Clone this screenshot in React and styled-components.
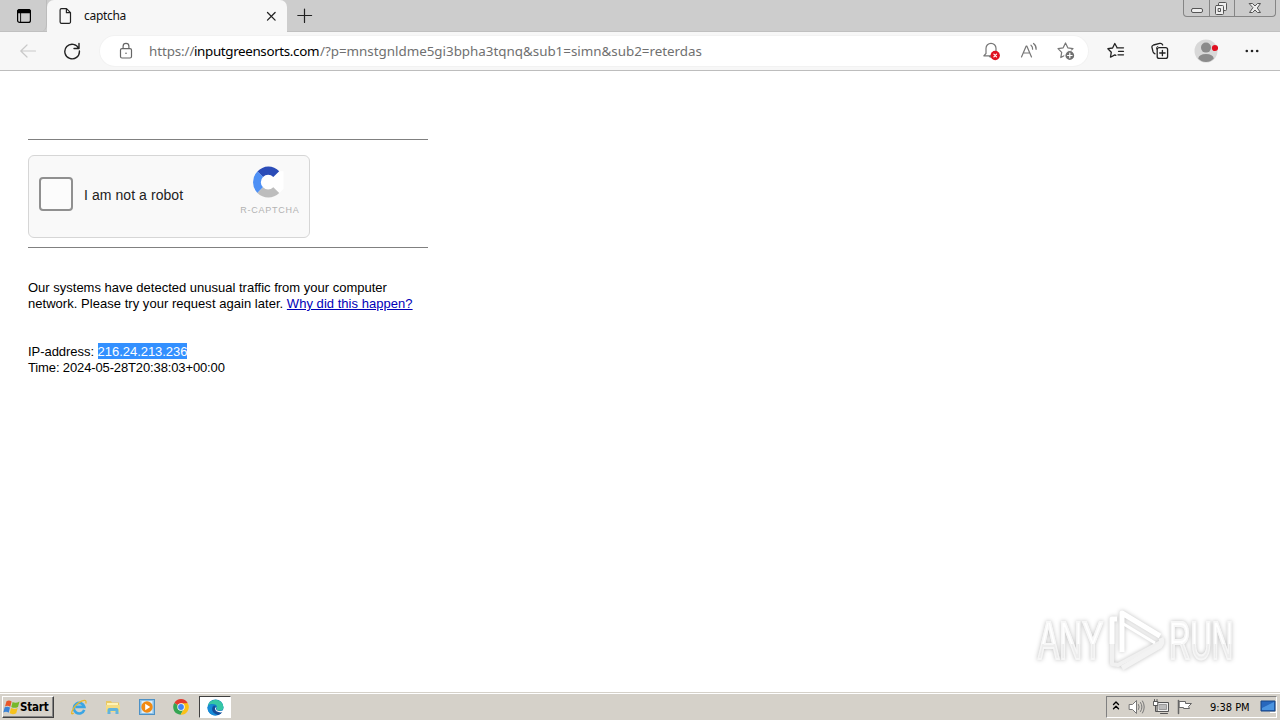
import React from 'react';
import styled, { createGlobalStyle } from 'styled-components';

const GlobalStyle = createGlobalStyle`
  body {
    margin: 0;
    overflow: hidden;
    background: #fff;
  }
  svg {
    display: block;
    flex: none;
  }
`;

const Screen = styled.div`
  display: flex;
  flex-direction: column;
  width: 1280px;
  height: 720px;
  font-family: "Liberation Sans", Arial, sans-serif;
`;

// ---- browser chrome ----

const TabStrip = styled.div`
  display: flex;
  align-items: flex-start;
  height: 32px;
  background: #cdcdcd;
  box-shadow: inset 0 -1px #c0c0c0;
`;

const TabMenu = styled.div`
  box-sizing: border-box;
  width: 47px;
  height: 32px;
  padding: 8px 0 0 16px;
  border-radius: 0 0 7px 0;
  border-right: 1px solid #bcbcbc;
`;

const Tab = styled.div`
  box-sizing: border-box;
  display: flex;
  align-items: center;
  width: 240px;
  height: 32px;
  padding-left: 11px;
  background: #f7f7f7;
  border-radius: 7px 7px 0 0;
`;

const TabTitle = styled.div`
  width: 181px;
  padding-left: 10px;
  font: 12px/16px "Noto Sans", sans-serif;
  letter-spacing: -0.3px;
  color: #111;
`;

const NewTab = styled.div`
  flex: 1;
  padding: 8px 0 0 10px;
`;

const WindowButtons = styled.div`
  box-sizing: border-box;
  display: flex;
  width: 93px;
  height: 17px;
  margin-right: 4px;
  border: 1px solid #858585;
  border-top: 0;
  border-radius: 0 0 4px 4px;
  background: #cbcbcb;
`;

const WindowButton = styled.div`
  display: flex;
  box-sizing: border-box;
  justify-content: center;
  width: ${props => props.$width}px;
  height: 16px;
  border-left: ${props => (props.$first ? '0' : '1px solid #858585')};
`;

const Toolbar = styled.div`
  box-sizing: border-box;
  display: flex;
  align-items: center;
  height: 39px;
  background: #f7f7f7;
  border-bottom: 1px solid #bdbdbd;
`;

const ToolButton = styled.div`
  display: flex;
  justify-content: center;
  width: ${props => props.$width}px;
`;

const AddressBar = styled.div`
  box-sizing: border-box;
  display: flex;
  align-items: center;
  width: 988px;
  height: 30px;
  padding-left: 18px;
  border-radius: 15px;
  background: #fff;
  box-shadow: 0 0 0 1px #f2f2f2;
`;

const Url = styled.div`
  flex: 1;
  display: flex;
  padding-left: 15px;
  font: 13.4px/20px "Noto Sans", sans-serif;
  white-space: nowrap;
`;

const UrlPart = styled.span`
  width: ${props => props.$width}px;
  letter-spacing: ${props => props.$spacing}px;
  color: ${props => (props.$host ? '#000' : '#707070')};
`;

// ---- page ----

const Page = styled.main`
  box-sizing: border-box;
  position: relative;
  flex: 1;
  padding: 68px 28px 0;
  background: #fff;
`;

const Rule = styled.div`
  width: 400px;
  height: 1px;
  background: #808080;
`;

const CaptchaBox = styled.div`
  box-sizing: border-box;
  display: flex;
  width: 282px;
  height: 83px;
  margin: 15px 0 9px;
  padding: 9px 9px 0 10px;
  border: 1px solid #d6d6d6;
  border-radius: 6px;
  background: #f9f9f9;
`;

const Checkbox = styled.div`
  box-sizing: border-box;
  width: 34px;
  height: 34px;
  margin-top: 12px;
  border: 2px solid #909090;
  border-radius: 4px;
  background: #fcfcfc;
`;

const CaptchaLabel = styled.div`
  flex: 1;
  padding: 21px 0 0 11px;
  font-size: 14px;
  line-height: 18px;
  letter-spacing: 0.07px;
  color: #222;
`;

const Brand = styled.div`
  display: flex;
  flex-direction: column;
  align-items: center;
  width: 60px;
`;

const BrandLogo = styled.svg`
  margin-right: 4px;
`;

const BrandName = styled.div`
  margin-top: 5px;
  font-size: 9px;
  line-height: 12px;
  letter-spacing: 0.75px;
  white-space: nowrap;
  color: #b2b2b2;
`;

const Message = styled.div`
  margin-top: 32px;
  font-size: 13px;
  line-height: 16px;
  color: #000;
`;

const Line = styled.div`
  height: 16px;
  white-space: nowrap;
  letter-spacing: ${props => props.$spacing}px;
`;

const WhyLink = styled.a`
  color: #0000b8;
  text-decoration: underline;
`;

const Selected = styled.span`
  display: inline-block;
  height: 16px;
  margin-top: -1px;
  vertical-align: top;
  line-height: 18px;
  background: #3390ff;
  color: #fff;
`;

const Watermark = styled.div`
  position: absolute;
  left: 1038px;
  top: 537px;
  display: flex;
  align-items: center;
  filter: drop-shadow(0 0 2px rgba(0, 0, 0, 0.25));
`;

const WatermarkWord = styled.div`
  width: ${props => props.$width}px;
  height: 64px;
`;

const WatermarkText = styled.span`
  display: inline-block;
  font: 53px/64px "Liberation Sans", sans-serif;
  color: transparent;
  background: linear-gradient(#fff 54%, #ededed 54%);
  background-clip: text;
  -webkit-text-stroke: 2px rgba(246, 246, 246, 0.9);
  transform: scaleX(${props => props.$scale});
  transform-origin: 0 0;
  white-space: nowrap;
`;

// ---- taskbar ----

const Taskbar = styled.footer`
  box-sizing: border-box;
  display: flex;
  align-items: flex-start;
  height: 28px;
  padding: 3px 3px 0 2px;
  background: #d5d1c9;
  border-top: 1px solid #d5d1c9;
  box-shadow: inset 0 1px #fff;
`;

const StartButton = styled.div`
  box-sizing: border-box;
  display: flex;
  align-items: center;
  width: 52px;
  height: 22px;
  border: 1px solid;
  border-color: #fff #404040 #404040 #fff;
  box-shadow: inset -1px -1px #858585;
  font: bold 11.5px/18px "DejaVu Sans Condensed", sans-serif;
  letter-spacing: -0.2px;
  color: #000;
`;

const QuickLaunch = styled.div`
  flex: 1;
  display: flex;
  align-items: center;
  gap: 18px;
  padding-left: 17px;
`;

const ActiveTask = styled.div`
  box-sizing: border-box;
  display: flex;
  justify-content: center;
  align-items: center;
  width: 32px;
  height: 22px;
  margin-left: -8px;
  border: 1px solid;
  border-color: #404040 #fff #fff #404040;
  background: #fff;
`;

const Tray = styled.div`
  box-sizing: border-box;
  display: flex;
  align-items: center;
  width: 171px;
  height: 22px;
  padding-left: 5px;
  border: 1px solid;
  border-color: #808080 #fff #fff #808080;
`;

const Clock = styled.div`
  width: 54px;
  padding-left: 11px;
  margin-top: 1px;
  font: 11px/16px "DejaVu Sans Condensed", sans-serif;
  letter-spacing: -0.05px;
  white-space: nowrap;
  color: #000;
`;

function LineIcon({ width, height, color = '#222', sw = 1.2, children }) {
  return (
    <svg width={width} height={height} viewBox={`0 0 ${width} ${height}`} fill="none" stroke={color}
      strokeWidth={sw} strokeLinejoin="round" strokeLinecap="round">
      {children}
    </svg>
  );
}

function Tabs() {
  return (
    <TabStrip>
      <TabMenu>
        <LineIcon width={16} height={16} color="#000">
          <rect x="1.6" y="1.6" width="12.8" height="12.8" rx="2" />
          <path d="M1.600 4.600V3.600a2 2 0 0 1 2-2h8.800a2 2 0 0 1 2 2v1z" fill="#000" />
          <path d="M4.600 5v9" strokeWidth=".9" />
        </LineIcon>
      </TabMenu>
      <Tab>
        <LineIcon width={16} height={16}>
          <path d="M3.500.6h5l4 4v9.300a1.400 1.400 0 0 1-1.400 1.400H3.500A1.400 1.400 0 0 1 2.100 14V2A1.400 1.400 0 0 1 3.500.6zM8.400.8v3.900h4" />
        </LineIcon>
        <TabTitle>captcha</TabTitle>
        <LineIcon width={13} height={14} sw={1.3}>
          <path d="M2.500 3.500l7.600 7.600M10.100 3.500l-7.600 7.600" />
        </LineIcon>
      </Tab>
      <NewTab>
        <LineIcon width={16} height={16} sw={1.2}>
          <path d="M7.500 1v13.500M.8 7.500h13.800" />
        </LineIcon>
      </NewTab>
      <WindowButtons>
        <WindowButton $width={25} $first>
          <LineIcon width={14} height={16} color="#555" sw={1}>
            <rect x="1.500" y="8.500" width="11" height="4" rx="1.500" fill="#eee" />
          </LineIcon>
        </WindowButton>
        <WindowButton $width={25}>
          <LineIcon width={14} height={16} color="#555" sw={1}>
            <rect x="3.500" y="2.500" width="8" height="8" rx="1" fill="#eee" />
            <rect x=".500" y="5.500" width="8" height="9" rx="1" fill="#eee" />
            <rect x="3.500" y="8.500" width="2" height="3" />
          </LineIcon>
        </WindowButton>
        <WindowButton $width={41}>
          <LineIcon width={14} height={16} color="#555" sw={1}>
            <path d="M1.500 3.500h3L7 6l2.500-2.500h3L9.300 8l3.200 4.500h-3L7 10l-2.500 2.500h-3L4.700 8z" fill="#eee" />
          </LineIcon>
        </WindowButton>
      </WindowButtons>
    </TabStrip>
  );
}

function AddressRow() {
  return (
    <Toolbar>
      <ToolButton $width={56}>
        <LineIcon width={18} height={16} color="#c9c9c9">
          <path d="M16.500 8H2M8 2L1.800 8 8 14" />
        </LineIcon>
      </ToolButton>
      <ToolButton $width={32}>
        <LineIcon width={18} height={18} sw={1.4}>
          <path d="M15.800 6.600A7.300 7.300 0 1 0 16.400 9M16 1.500v5h-5" />
        </LineIcon>
      </ToolButton>
      <ToolButton $width={12} />
      <AddressBar>
        <LineIcon width={16} height={18} color="#666">
          <rect x="2.500" y="6.600" width="11" height="9.400" rx="1.500" />
          <path d="M5.100 6.500V4.300a2.900 2.900 0 0 1 5.800 0v2.200" />
          <circle cx="8" cy="11.300" r=".8" fill="#666" stroke="none" />
        </LineIcon>
        <Url>
          <UrlPart $width={45} $spacing={-0.1}>https://</UrlPart>
          <UrlPart $width={126} $spacing={-0.36} $host>inputgreensorts.com</UrlPart>
          <UrlPart $width={390} $spacing={-0.02}>/?p=mnstgnldme5gi3bpha3tqnq&amp;sub1=simn&amp;sub2=reterdas</UrlPart>
        </Url>
        <ToolButton $width={30}>
          <LineIcon width={20} height={20} color="#777">
            <path d="M5 12.500V7.300a5 5 0 0 1 10 0v5.200l1.600 2.300H2.800zM8 15q1.400 2.400 3.200 0" />
            <circle cx="14.200" cy="14.500" r="4.700" fill="#e01020" stroke="none" />
            <path d="M12.900 13.200l2.600 2.600M15.500 13.200l-2.600 2.600" stroke="#fff" />
          </LineIcon>
        </ToolButton>
        <ToolButton $width={46}>
          <LineIcon width={18} height={18} color="#777">
            <path d="M1.500 15L6.200 4h.6l4.700 11M3.200 11h6.600M11 3.200q1.800 1.500 1.600 4M13.500 1.500q3 2.300 2.600 5.800" />
          </LineIcon>
        </ToolButton>
        <ToolButton $width={28}>
          <LineIcon width={20} height={20} color="#777">
            <path d="M9.500 2l2.300 4.800 5.200.8-3.800 3.600.9 5.300-4.600-2.500-4.700 2.500.9-5.200L2 7.600l5.200-.8z" />
            <circle cx="13.800" cy="14.500" r="5" fill="#707070" stroke="#fff" />
            <path d="M11.500 14.500h4.600M13.800 12.200v4.600" stroke="#fff" />
          </LineIcon>
        </ToolButton>
        <ToolButton $width={8} />
      </AddressBar>
      <ToolButton $width={56}>
        <LineIcon width={18} height={18} sw={1.3}>
          <path d="M10 5.500L7.800 1.500 5.600 6 .9 6.700l3.400 3.500-.8 5 4.300-2.300 1 .5M9.800 5.800h6.700M11.500 9.300h5M11 12.800h5.500" />
        </LineIcon>
      </ToolButton>
      <ToolButton $width={32}>
        <LineIcon width={18} height={18} sw={1.3}>
          <path d="M4 11.800Q2.600 11.300 2 9.700L1 5.600Q.5 3.600 2.500 3l6.200-1.600Q10.800.9 11.700 3" />
          <path d="M5.500 7V5.500Q5.600 4.500 6.800 4.500" strokeWidth=".8" />
          <rect x="6.200" y="5.600" width="10.400" height="10.800" rx="2" fill="#f7f7f7" />
          <path d="M8.700 11h5.400M11.400 8.300v5.400" />
        </LineIcon>
      </ToolButton>
      <ToolButton $width={60}>
        <svg width="24" height="24" viewBox="0 0 24 24">
          <circle cx="12" cy="12" r="11.500" fill="#d8d8d8" />
          <circle cx="12" cy="8.600" r="5" fill="#8b8b8b" />
          <path d="M4.200 19.500Q5 15 12 15t7.800 4.500Q16.500 23 12 23t-7.800-3.500z" fill="#8b8b8b" />
          <circle cx="21" cy="9" r="3.100" fill="#e01020" />
        </svg>
      </ToolButton>
      <ToolButton $width={32}>
        <svg width="16" height="4" viewBox="0 0 16 4" fill="#222">
          <circle cx="2.800" cy="2" r="1.300" />
          <circle cx="8" cy="2" r="1.300" />
          <circle cx="13.200" cy="2" r="1.300" />
        </svg>
      </ToolButton>
    </Toolbar>
  );
}

function Captcha() {
  return (
    <CaptchaBox>
      <Checkbox />
      <CaptchaLabel>I am not a robot</CaptchaLabel>
      <Brand>
        <BrandLogo width="34" height="34" viewBox="0 0 34 34">
          <path d="M22.300 12l5.900-5.800H32.500V24l-4.300 4-5.900-5.700a7.300 7.300 0 1 1 0-10.300z" fill="#fff" />
          <path d="M6.400 6.400A15 15 0 0 1 28.200 6.200L22.300 12A7.200 7.200 0 0 0 12 12z" fill="#2b4cb8" />
          <path d="M6.400 6.400A15.500 15.500 0 0 0 6.400 28L12 22.300A7.200 7.200 0 0 1 12 12z" fill="#4e90f5" />
          <path d="M6.400 28A15.500 15.500 0 0 0 28.200 28L22.300 22.300A7.200 7.200 0 0 1 12 22.300z" fill="#bdbdbd" />
        </BrandLogo>
        <BrandName>R-CAPTCHA</BrandName>
      </Brand>
    </CaptchaBox>
  );
}

function AnyRun() {
  return (
    <Watermark>
      <WatermarkWord $width={67}>
        <WatermarkText $scale={0.6}>ANY</WatermarkText>
      </WatermarkWord>
      <svg width="64" height="66" viewBox="0 0 64 66" fill="none" strokeWidth="5" strokeLinejoin="round">
        <path d="M7 13V56l6 1 43-23" stroke="#f1f1f1" strokeWidth="4" />
        <path d="M17 60l38-22q3-3 1-8" stroke="#f3f3f3" />
        <path d="M12 11H7v25" stroke="#fff" />
        <path d="M17 44V5l38 23" stroke="#fff" />
        <path d="M17 15l33 20" stroke="#fff" strokeWidth="3" />
      </svg>
      <WatermarkWord $width={64}>
        <WatermarkText $scale={0.56}>RUN</WatermarkText>
      </WatermarkWord>
    </Watermark>
  );
}

function BottomBar() {
  return (
    <Taskbar>
      <StartButton>
        <svg width="17" height="17" viewBox="0 0 17 17">
          <path d="M3.500 2.300Q6 .8 8.600 2.500L7.300 7.700Q4.500 6 2 7.400z" fill="#e8572a" />
          <path d="M9.600 3Q12.700 4.600 16.500 2.500L15 8Q11.200 9.700 8.300 8z" fill="#76b82a" />
          <path d="M1.700 8.300Q4.400 7 7 8.600L5.700 13.700Q3.200 12 .3 13.500z" fill="#3b83d6" />
          <path d="M8 9.100Q11.200 10.700 14.700 9L13.200 14.200Q9.800 16 6.700 14.300z" fill="#f6c21c" />
        </svg>
        Start
      </StartButton>
      <QuickLaunch>
        <svg width="16" height="16" viewBox="0 0 16 16" fill="none">
          <path d="M13.200 10.800A5.300 5.300 0 1 1 13.300 7.900H4.500" stroke="#3aa5e4" strokeWidth="2.600" />
          <path d="M2.800 14Q-.5 16.300 1.200 12 4 5.500 10.500 2.200 16-.3 14.800 4.500" stroke="#e9b82c" strokeWidth="1.300" />
        </svg>
        <svg width="16" height="16" viewBox="0 0 16 16">
          <path d="M1 2h5l1 1.500h7V13H1z" fill="#e9c864" />
          <path d="M2 4h11v4H2z" fill="#fff3b5" />
          <path d="M1 6h14v7H1z" fill="#f4dc83" />
          <path d="M2.500 15v-4q0-2 2-2h7q2 0 2 2v4h-3v-3h-5v3z" fill="#62b4dc" />
        </svg>
        <svg width="16" height="16" viewBox="0 0 16 16">
          <rect x=".5" y=".5" width="15" height="15" fill="#8cc1e7" stroke="#4d91c5" />
          <rect x="2.500" y="2" width="11" height="12" fill="#dceefa" />
          <circle cx="8" cy="8" r="5.700" fill="#f18a12" />
          <path d="M6.200 4.800v6.400L11.200 8z" fill="#fff" />
        </svg>
        <svg width="16" height="16" viewBox="0 0 16 16">
          <path d="M8 8L1.300 4A7.700 7.700 0 0 1 14.700 4z" fill="#e33b2e" />
          <path d="M8 8L1.300 4A7.700 7.700 0 0 0 7.600 15.700L11.200 9z" fill="#35a552" />
          <path d="M8 4.300h6.800A7.700 7.700 0 0 1 7.600 15.700L11.500 9z" fill="#fbc116" />
          <circle cx="8" cy="8" r="3.700" fill="#fff" />
          <circle cx="8" cy="8" r="2.900" fill="#4285f4" />
        </svg>
        <ActiveTask>
          <svg width="17" height="17" viewBox="0 0 17 17">
            <circle cx="8.500" cy="8.500" r="8" fill="#1277c9" />
            <path d="M.7 7A8 8 0 0 1 16.500 8.200q0 3.300-4 3.300-3.500 0-2.800-2.300Q10.500 6.500 8 5.500 3.500 4 .7 7z" fill="#36c7a5" />
            <path d="M.6 8Q3 4.500 7 5.500 4.800 7 5 10q.7 4.800 6 6Q5 17.500 1.700 13 .2 10.800.6 8z" fill="#168bd8" />
            <path d="M8.500 7.500Q8 12.500 15.500 12.700 13.500 15.500 11 16 4.500 13.500 5.200 9.500 6 6 8.500 7.500z" fill="#164c98" />
            <path d="M9.500 8q-1.800 3.400 2.300 4 3.200.3 4.500-1.100l1 1-1.700 1.400Q8 14 8 9z" fill="#fff" />
          </svg>
        </ActiveTask>
      </QuickLaunch>
      <Tray>
        <LineIcon width={8} height={15} color="#000" sw={1.400}>
          <path d="M1.500 4.500L4 2l2.500 2.500M1.500 8.800L4 6.300l2.500 2.500" />
        </LineIcon>
        <ToolButton $width={36}>
          <LineIcon width={17} height={16} color="#777" sw={1}>
            <path d="M1.500 5.500h3l4-4v13l-4-4h-3z" fill="#fff" />
            <path d="M10.500 5.500q1.500 2.500 0 5M12.500 3.500q3 4.500 0 9M14.500 2q3.600 6 0 12" />
          </LineIcon>
        </ToolButton>
        <LineIcon width={17} height={16} color="#555" sw={1}>
          <rect x="4.500" y="3.500" width="11" height="9" fill="#eee" />
          <rect x="6.500" y="5.500" width="7" height="5" fill="#bbb" stroke="#999" />
          <path d="M7.500 14.500h7M2.500 6.500v6h3" />
          <path d="M.8 2.500h4v4h-4zM1.500.5v2M4 .5v2" fill="#fff" />
        </LineIcon>
        <ToolButton $width={31}>
          <LineIcon width={17} height={16} color="#666" sw={1}>
            <path d="M2.500 1.500v13" strokeWidth="1.500" />
            <path d="M3.500 2.500h6v2h6l-3 3 1 2h-6v-1h-4z" fill="#fff" />
          </LineIcon>
        </ToolButton>
        <Clock>9:38 PM</Clock>
        <svg width="16" height="14" viewBox="0 0 16 14">
          <path d="M1 1h14v10H1z" fill="#2767bd" stroke="#174583" />
          <path d="M2 8L14 2v8H2z" fill="#4b94e0" />
          <path d="M10 12h6v1h-6z" fill="#fff" />
        </svg>
      </Tray>
    </Taskbar>
  );
}

export default function App() {
  return (
    <Screen>
      <GlobalStyle />
      <Tabs />
      <AddressRow />
      <Page>
        <Rule />
        <Captcha />
        <Rule />
        <Message>
          <Line $spacing={0}>Our systems have detected unusual traffic from your computer</Line>
          <Line $spacing={0.035}>
            network. Please try your request again later. <WhyLink>Why did this happen?</WhyLink>
          </Line>
        </Message>
        <Message>
          <Line $spacing={-0.04}>IP-address: <Selected>216.24.213.236</Selected></Line>
          <Line $spacing={-0.13}>Time: 2024-05-28T20:38:03+00:00</Line>
        </Message>
        <AnyRun />
      </Page>
      <BottomBar />
    </Screen>
  );
}
